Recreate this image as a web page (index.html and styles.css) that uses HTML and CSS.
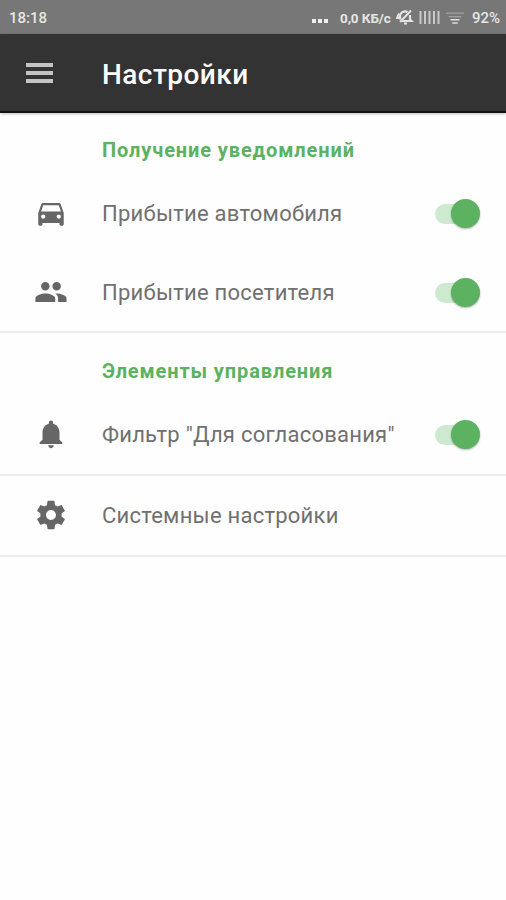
FILE: index.html
```html
<!DOCTYPE html>
<html lang="ru">
<head>
    <meta charset="UTF-8">
    <meta name="viewport" content="width=device-width, initial-scale=1.0">
    <title>Настройки</title>
    <link rel="stylesheet" href="styles.css">
</head>
<body>
    <div class="status-bar">
        <span class="time">18:18</span>
        <span class="dots"><i></i><i></i><i></i></span>
        <span class="speed">0,0 КБ/с</span>
        <svg class="mute" viewBox="0 0 18 18">
            <path d="M4.500 11.500 4 8a5 5 0 0 1 7.500-4M14 7v4.500l1.500 1.500H6M8 15.500h3" fill="none" stroke="#e4e4e4" stroke-width="2.200"/>
            <path d="M4 14 15 2.500M3 5.500 1 10h3" fill="none" stroke="#e4e4e4" stroke-width="1.900"/>
        </svg>
        <svg class="signal" viewBox="0 0 21 14">
            <path d="M1.500 0v13M6 0v13M10.500 0v13M15 0v13M19.500 0v13" stroke="#c8c8c8" stroke-width="2"/>
        </svg>
        <svg class="wifi" viewBox="0 0 20 14">
            <path d="M0 1.500h20M3 5.500h14" stroke="#a2a2a2" stroke-width="1.500"/>
            <path d="M5 9h10M7 12.500h6" stroke="#dedede" stroke-width="1.700"/>
        </svg>
        <span class="battery">92%</span>
    </div>

    <div class="app-bar">
        <div class="menu"><i></i><i></i><i></i></div>
        <h1 class="title">Настройки</h1>
    </div>

    <div class="section">
        <h2 class="heading">Получение уведомлений</h2>
        <div class="row">
            <svg class="icon" viewBox="0 0 24 24">
                <path d="M18.920 6.010C18.720 5.420 18.160 5 17.500 5h-11c-.66 0-1.210.42-1.420 1.010L3 12v8c0 .55.45 1 1 1h1c.55 0 1-.45 1-1v-1h12v1c0 .55.45 1 1 1h1c.55 0 1-.45 1-1v-8l-2.080-5.990zM6.500 16c-.83 0-1.500-.67-1.500-1.500S5.670 13 6.500 13s1.500.67 1.500 1.500S7.330 16 6.500 16zm11 0c-.83 0-1.500-.67-1.500-1.500s.67-1.500 1.500-1.500 1.500.67 1.500 1.500-.67 1.500-1.500 1.500zM5 11l1.500-4.500h11L19 11H5z"/>
            </svg>
            <span class="label">Прибытие автомобиля</span>
            <span class="switch"></span>
        </div>
        <div class="row">
            <svg class="icon" viewBox="0 0 24 24">
                <path d="M16 11c1.660 0 2.990-1.340 2.990-3S17.660 5 16 5c-1.660 0-3 1.340-3 3s1.340 3 3 3zm-8 0c1.660 0 2.990-1.340 2.990-3S9.660 5 8 5C6.340 5 5 6.340 5 8s1.340 3 3 3zm0 2c-2.330 0-7 1.170-7 3.500V19h14v-2.500c0-2.330-4.670-3.500-7-3.500zm8 0c-.29 0-.62.02-.97.05 1.160.84 1.970 1.970 1.970 3.450V19h6v-2.500c0-2.330-4.670-3.500-7-3.500z"/>
            </svg>
            <span class="label">Прибытие посетителя</span>
            <span class="switch"></span>
        </div>
    </div>

    <div class="section controls">
        <h2 class="heading">Элементы управления</h2>
        <div class="row">
            <svg class="icon" viewBox="0 0 24 24">
                <path d="M12 22c1.100 0 2-.9 2-2h-4c0 1.100.89 2 2 2zm6-6v-5c0-3.070-1.640-5.640-4.500-6.320V4c0-.83-.67-1.500-1.500-1.500s-1.500.67-1.500 1.500v.68C7.630 5.360 6 7.920 6 11v5l-2 2v1h16v-1l-2-2z"/>
            </svg>
            <span class="label">Фильтр "Для согласования"</span>
            <span class="switch"></span>
        </div>
    </div>

    <div class="section system">
        <div class="row">
            <svg class="icon" viewBox="0 0 24 24">
                <path d="M19.430 12.980c.04-.32.07-.64.07-.98s-.03-.66-.07-.98l2.110-1.650c.19-.15.24-.42.12-.64l-2-3.460c-.12-.22-.39-.3-.61-.22l-2.490 1c-.52-.4-1.080-.73-1.690-.98l-.38-2.650C14.460 2.180 14.250 2 14 2h-4c-.25 0-.46.18-.49.42l-.38 2.650c-.61.25-1.170.59-1.690.98l-2.490-1c-.23-.09-.49 0-.61.22l-2 3.460c-.13.22-.07.49.12.64l2.110 1.650c-.04.32-.07.65-.07.98s.03.66.07.98l-2.110 1.650c-.19.15-.24.42-.12.64l2 3.460c.12.22.39.3.61.22l2.490-1c.52.4 1.080.73 1.690.98l.38 2.650c.03.24.24.42.49.42h4c.25 0 .46-.18.49-.42l.38-2.650c.61-.25 1.170-.59 1.690-.98l2.490 1c.23.09.49 0 .61-.22l2-3.460c.12-.22.07-.49-.12-.64l-2.110-1.650zM12 15.500c-1.930 0-3.500-1.570-3.500-3.500s1.570-3.500 3.500-3.500 3.500 1.570 3.500 3.500-1.570 3.500-3.500 3.500z"/>
            </svg>
            <span class="label">Системные настройки</span>
        </div>
    </div>
</body>
</html>
```
FILE: styles.css
```css
body {
    margin: 0;
    min-height: 900px;
    background: #fefefe;
    font-family: Roboto, "Noto Sans", sans-serif;
}
.status-bar {
    display: flex;
    align-items: center;
    height: 34px;
    padding: 0 4px 0 9px;
    box-sizing: border-box;
    background: #777;
    color: #e6e6e6;
    font-size: 15px;
    font-weight: 500;
    white-space: nowrap;
}
.time {
    margin-right: auto;
    padding-top: 2px;
}
.dots {
    display: flex;
    gap: 2px;
    margin: 7px 12px 0 0;
}
.dots i {
    width: 4px;
    height: 4px;
    background: #eee;
}
.speed {
    width: 54px;
    padding-top: 2px;
    font-size: 13.5px;
    font-weight: 700;
    letter-spacing: -0.1px;
}
.mute {
    width: 18px;
    height: 18px;
    margin-left: 2px;
}
.signal {
    width: 21px;
    height: 14px;
    margin: 1px 0 0 5px;
}
.wifi {
    width: 18px;
    height: 14px;
    margin: 2px 8px 0 6px;
}
.battery {
    width: 30px;
    padding-top: 2px;
}
.app-bar {
    display: flex;
    align-items: center;
    height: 79px;
    padding: 0 26px;
    box-sizing: border-box;
    background: #333;
    border-bottom: 2px solid #111;
    box-shadow: 0 1px 3px rgba(0, 0, 0, 0.25);
}
.menu {
    display: flex;
    flex-direction: column;
    gap: 4px;
    width: 27px;
    margin: 1px 49px 0 0;
}
.menu i {
    height: 4px;
    background: #c4c4c4;
}
.title {
    margin: 3px 0 0;
    color: #fff;
    font-size: 28px;
    font-weight: 500;
    letter-spacing: 0.45px;
}
.section {
    height: 196px;
    padding-top: 22px;
    border-bottom: 2px solid #ececec;
}
.heading {
    margin: 0 0 0 102px;
    height: 39px;
    line-height: 30px;
    color: #5cb260;
    font-size: 20px;
    font-weight: 700;
    letter-spacing: 0.88px;
    white-space: nowrap;
}
.row {
    display: flex;
    align-items: center;
    height: 79px;
    padding: 0 26px 0 34px;
}
.icon {
    width: 34px;
    height: 34px;
    margin: 0 34px 2px 0;
    fill: #666;
}
.label {
    margin-right: auto;
    color: #707070;
    font-size: 22px;
    letter-spacing: 0.24px;
    white-space: nowrap;
}
.switch {
    display: flex;
    align-items: center;
    width: 45px;
    height: 29px;
}
.switch::before {
    content: "";
    width: 36px;
    height: 20px;
    border-radius: 10px;
    background: #cdead0;
}
.switch::after {
    content: "";
    width: 29px;
    height: 29px;
    margin-left: -20px;
    border-radius: 50%;
    background: #5cb260;
    box-shadow: 0 1px 2px rgba(0, 0, 0, 0.3);
}
.controls {
    height: 118px;
    padding-top: 23px;
}
.system {
    height: 79px;
    padding-top: 0;
}
```
